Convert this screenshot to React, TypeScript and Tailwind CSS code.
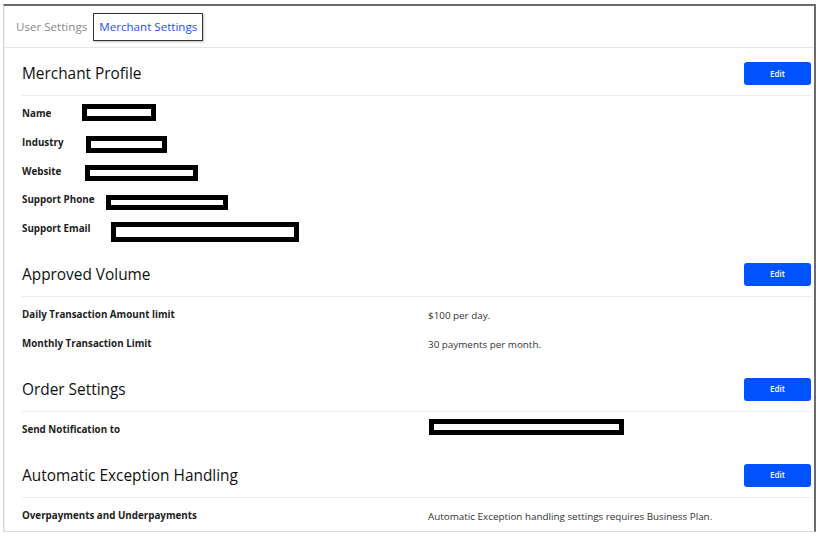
import React from "react";

const font = { fontFamily: '"Open Sans", "Noto Sans", Arial, sans-serif' };

function EditButton() {
  return (
    <button className="h-[23px] w-[67px] rounded-[3px] bg-[#0052ff] text-[8px] font-semibold text-white leading-none">
      Edit
    </button>
  );
}

function SectionHeader({ title }: { title: string }) {
  return (
    <div className="flex items-center justify-between border-b border-[#ececec] pb-[10px]">
      <h2 className="text-[15.4px] leading-[23px] text-[#111]">{title}</h2>
      <EditButton />
    </div>
  );
}

function Redact({ w, h, cls }: { w: string; h: string; cls?: string }) {
  return <div className={`${w} ${h} ${cls ?? ""} border-[5px] border-black bg-white`} />;
}

function Label({ children, w }: { children: React.ReactNode; w?: string }) {
  return (
    <span className={`${w ?? ""} shrink-0 text-[9.8px] font-bold text-[#222]`}>{children}</span>
  );
}

export default function App() {
  return (
    <div className="h-[537px] w-[822px] bg-white" style={font}>
      <div className="ml-[3px] pt-[4px]">
        <div className="h-[528px] w-[813px] overflow-hidden border-t-2 border-r-2 border-l border-b border-t-[#6b6b6b] border-r-[#6b6b6b] border-l-[#d9d9d9] border-b-[#d9d9d9] shadow-[inset_1px_0_0_#f0f0f0]">
          {/* Tab bar */}
          <div className="flex items-center border-b border-[#e2e6f0] pl-[6px] pt-[7px] pb-[6px]">
            <div className="flex h-[28px] items-center px-[6px] text-[11.6px] text-[#8a8a8a]">User Settings</div>
            <div className="flex h-[28px] items-center border border-[#333] px-[5px] text-[11.6px] text-[#1f4fff] shadow-[1px_1px_2px_rgba(0,0,0,0.25)]">
              Merchant Settings
            </div>
          </div>

          <div className="pl-[18px] pr-[3px]">
            {/* Merchant Profile */}
            <div className="pt-[14px]">
              <SectionHeader title="Merchant Profile" />
              <div className="pt-[4px] pb-[5px]">
                <div className="flex h-[28.8px] items-center">
                  <Label w="w-[60px]">Name</Label>
                  <Redact w="w-[74px]" h="h-[17px]" cls="mb-[3px]" />
                </div>
                <div className="flex h-[28.8px] items-center">
                  <Label w="w-[64px]">Industry</Label>
                  <Redact w="w-[81px]" h="h-[17px]" cls="mt-[3px]" />
                </div>
                <div className="flex h-[28.8px] items-center">
                  <Label w="w-[63px]">Website</Label>
                  <Redact w="w-[113px]" h="h-[16px]" cls="mt-[2px]" />
                </div>
                <div className="flex h-[28.8px] items-center">
                  <Label w="w-[84px]">Support Phone</Label>
                  <Redact w="w-[122px]" h="h-[15px]" cls="mt-[3px]" />
                </div>
                <div className="flex h-[28.8px] items-center">
                  <Label w="w-[89px]">Support Email</Label>
                  <Redact w="w-[188px]" h="h-[20px]" cls="mt-[5px]" />
                </div>
              </div>
            </div>

            {/* Approved Volume */}
            <div className="pt-[14px]">
              <SectionHeader title="Approved Volume" />
              <div className="pt-[4px] pb-[5px]">
                <div className="flex h-[29px] items-center">
                  <Label w="w-[406px]">Daily Transaction Amount limit</Label>
                  <span className="text-[9.85px] text-[#333]">$100 per day.</span>
                </div>
                <div className="flex h-[29px] items-center">
                  <Label w="w-[406px]">Monthly Transaction Limit</Label>
                  <span className="text-[9.85px] text-[#333]">30 payments per month.</span>
                </div>
              </div>
            </div>

            {/* Order Settings */}
            <div className="pt-[14px]">
              <SectionHeader title="Order Settings" />
              <div className="pt-[4px] pb-[5px]">
                <div className="flex h-[29px] items-center">
                  <Label w="w-[407px]">Send Notification to</Label>
                  <Redact w="w-[195px]" h="h-[16px]" cls="mb-[6px]" />
                </div>
              </div>
            </div>

            {/* Automatic Exception Handling */}
            <div className="pt-[14px]">
              <SectionHeader title="Automatic Exception Handling" />
              <div className="pt-[4px] pb-[5px]">
                <div className="flex h-[29px] items-center">
                  <Label w="w-[406px]">Overpayments and Underpayments</Label>
                  <span className="text-[9.85px] text-[#333]">
                    Automatic Exception handling settings requires Business Plan.
                  </span>
                </div>
              </div>
            </div>
          </div>
        </div>
      </div>
    </div>
  );
}
